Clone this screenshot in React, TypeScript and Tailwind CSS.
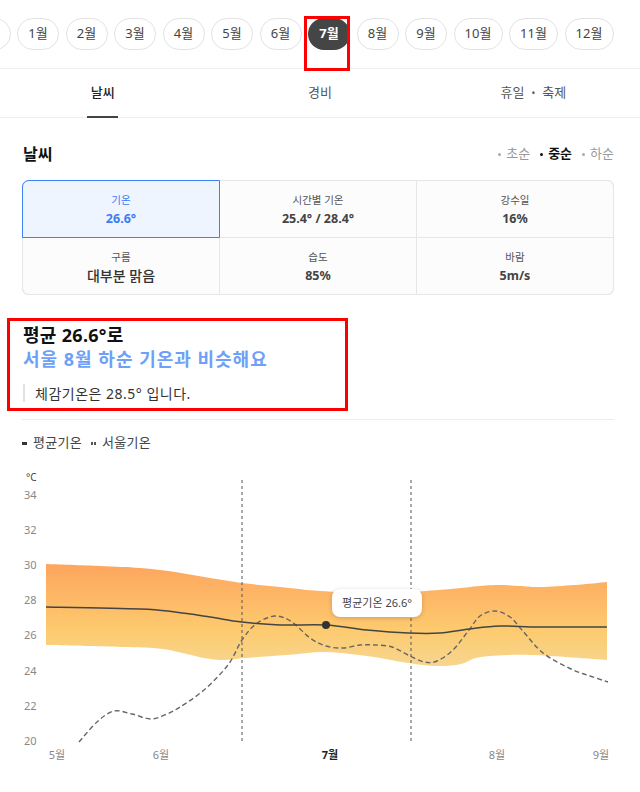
import React from "react";

type Pt = [number, number];

function smooth(points: Pt[], t = 0.5): string {
  let d = `M${points[0][0]},${points[0][1]}`;
  for (let i = 0; i < points.length - 1; i++) {
    const p0 = points[i - 1] || points[i];
    const p1 = points[i];
    const p2 = points[i + 1];
    const p3 = points[i + 2] || p2;
    const c1x = p1[0] + ((p2[0] - p0[0]) / 6) * t * 2;
    const c1y = p1[1] + ((p2[1] - p0[1]) / 6) * t * 2;
    const c2x = p2[0] - ((p3[0] - p1[0]) / 6) * t * 2;
    const c2y = p2[1] - ((p3[1] - p1[1]) / 6) * t * 2;
    d += ` C${c1x.toFixed(1)},${c1y.toFixed(1)} ${c2x.toFixed(1)},${c2y.toFixed(1)} ${p2[0]},${p2[1]}`;
  }
  return d;
}

const topEdge: Pt[] = [
  [46, 564], [100, 566], [140, 568], [175, 572], [210, 578], [242, 583], [280, 587],
  [320, 591], [370, 593], [410, 592], [450, 589], [480, 586], [500, 585], [520, 586],
  [540, 587], [575, 585], [607, 582],
];
const bottomEdge: Pt[] = [
  [46, 645], [122, 647], [163, 649], [204, 658], [224, 660], [245, 658], [286, 655],
  [326, 652], [367, 656], [408, 663], [437, 666], [461, 664], [481, 657], [530, 655],
  [607, 660],
];
const meanLine: Pt[] = [
  [46, 607], [140, 609], [175, 612], [210, 617], [242, 622], [280, 625], [326, 625],
  [367, 630], [408, 633], [440, 633], [469, 629], [500, 626], [540, 627], [607, 627],
];
const seoulLine: Pt[] = [
  [79, 742], [97, 722], [114, 711], [132, 714], [151, 719], [167, 714], [180, 707],
  [204, 690], [228, 665], [242, 640], [256, 624], [275, 616], [292, 622], [310, 638],
  [326, 646], [343, 648], [360, 645], [375, 645], [392, 647], [408, 655], [424, 662],
  [437, 661], [453, 650], [469, 630], [480, 616], [495, 611], [510, 617], [522, 630],
  [543, 653], [571, 669], [590, 676], [608, 682],
];

function areaPath(): string {
  const top = smooth(topEdge);
  const rev = [...bottomEdge].reverse();
  const bottom = smooth(rev).replace(/^M/, "L");
  return `${top} ${bottom} Z`;
}

const months = ["1월", "2월", "3월", "4월", "5월", "6월", "7월", "8월", "9월", "10월", "11월", "12월"];

function Cell({
  label,
  value,
  active,
  big,
  className,
}: {
  label: string;
  value: string;
  active?: boolean;
  big?: boolean;
  className?: string;
}) {
  return (
    <div
      className={
        "flex flex-col items-center justify-center pt-[2px] " +
        (active ? "bg-[#eef5ff] outline outline-1 outline-[#3d82f2] rounded-tl-[6px] z-10 " : "bg-[#fcfcfc] ") +
        (className || "")
      }
    >
      <div className={"text-[10.5px] leading-[14px] " + (active ? "text-[#3b7cf0]" : "text-[#555]")}>{label}</div>
      <div
        className={
          "mt-[3px] leading-[18px] " +
          (big ? "text-[14px] font-medium text-[#333]" : "text-[12.5px] font-bold ") +
          (active ? "text-[#3b7cf0]" : big ? "" : "text-[#444]")
        }
      >
        {value}
      </div>
    </div>
  );
}

function Dot({ dark }: { dark?: boolean }) {
  return <span className={"inline-block w-[3px] h-[3px] rounded-full mr-[5px] " + (dark ? "bg-[#111]" : "bg-[#aaa]")} />;
}

export default function App() {
  return (
    <div
      className="relative w-[640px] h-[792px] overflow-hidden bg-white text-[#222]"
      style={{ fontFamily: "'Noto Sans', 'Noto Sans CJK KR', sans-serif" }}
    >
      {/* Month bar */}
      <div className="h-[69px] border-b border-[#eeeeee] pt-[18px] overflow-hidden">
        <div className="flex gap-[6.5px] ml-[-39.5px]">
          <div className="w-[50px] h-[32px] shrink-0 rounded-full border border-[#e3e3e3]" />
          {months.map((m) => {
            const sel = m === "7월";
            const wide = m.length > 2;
            return (
              <div
                key={m}
                className={
                  "h-[32px] shrink-0 rounded-full flex items-center justify-center text-[13px] " +
                  (wide ? "w-[49px] " : "w-[42px] ") +
                  (sel ? "bg-[#454545] text-white font-bold" : "border border-[#e3e3e3] text-[#444]")
                }
              >
                {m}
              </div>
            );
          })}
        </div>
      </div>

      {/* Tabs */}
      <div className="grid grid-cols-3 h-[49px] border-b border-[#eeeeee]">
        <div className="relative flex items-center justify-center text-[13px] font-medium text-[#222]">
          <span className="mr-[8px]">날씨</span>
          <div className="absolute bottom-[-1px] left-[87px] w-[31px] h-[2px] bg-[#444]" />
        </div>
        <div className="flex items-center justify-center text-[13px] text-[#555]">경비</div>
        <div className="flex items-center justify-center text-[13px] text-[#555]">
          휴일<span className="mx-[7px] text-[10px]">•</span>축제
        </div>
      </div>

      {/* Weather section */}
      <div className="pl-[22px] pr-[26px]">
        <div className="mt-[24px] h-[24px] flex items-center justify-between">
          <div className="text-[16px] font-bold text-[#111] pl-[1px]">날씨</div>
          <div className="flex items-center text-[13px]">
            <Dot />
            <span className="text-[#999]">초순</span>
            <span className="ml-[10px]" />
            <Dot dark />
            <span className="text-[#111] font-bold">중순</span>
            <span className="ml-[10px]" />
            <Dot />
            <span className="text-[#999]">하순</span>
          </div>
        </div>

        <div className="mt-[14px] grid grid-cols-3 grid-rows-[56px_56px] gap-px bg-[#e6e6e6] border border-[#e6e6e6] rounded-[6px]">
          <Cell label="기온" value="26.6°" active />
          <Cell label="시간별 기온" value="25.4° / 28.4°" />
          <Cell label="강수일" value="16%" className="rounded-tr-[6px]" />
          <Cell label="구름" value="대부분 맑음" big className="rounded-bl-[6px]" />
          <Cell label="습도" value="85%" />
          <Cell label="바람" value="5m/s" className="rounded-br-[6px]" />
        </div>

        {/* Summary */}
        <div className="mt-[28px] pl-[1px]">
          <div className="text-[18px] leading-[24px] font-bold text-[#111] tracking-[0.3px]">평균 26.6°로</div>
          <div className="text-[18px] leading-[24px] font-bold text-[#6fa0f8] tracking-[1px]">서울 8월 하순 기온과 비슷해요</div>
          <div className="mt-[13px] h-[18px] border-l-2 border-[#e2e2e2] pl-[10px] flex items-center text-[14px] tracking-[0.5px] text-[#333]">
            체감기온은 28.5° 입니다.
          </div>
        </div>

        <div className="mt-[17px] border-t border-[#ececec]" />

        {/* Legend */}
        <div className="mt-[14px] h-[18px] flex items-center text-[13px] tracking-[0.3px] text-[#444]">
          <span className="inline-block w-[5px] h-[3px] bg-[#333] mr-[6px]" />
          평균기온
          <span className="inline-flex gap-[1px] ml-[9px] mr-[6px]">
            <span className="inline-block w-[2px] h-[3px] bg-[#555]" />
            <span className="inline-block w-[2px] h-[3px] bg-[#555]" />
          </span>
          서울기온
        </div>
      </div>

      {/* Chart */}
      <div className="relative mt-[8px] w-[640px] h-[332px]">
        <svg width={640} height={332} viewBox="0 460 640 332" className="block">
          <defs>
            <linearGradient id="band" x1="0" y1="564" x2="0" y2="672" gradientUnits="userSpaceOnUse">
              <stop offset="0" stopColor="#fda55e" />
              <stop offset="0.6" stopColor="#fdca6e" />
              <stop offset="1" stopColor="#f6d893" />
            </linearGradient>
          </defs>
          <text x={26} y={481} fontSize={10} fill="#444">°C</text>
          {[34, 32, 30, 28, 26, 24, 22, 20].map((v) => (
            <text key={v} x={24} y={741 - (v - 20) * 17.6 + 4} fontSize={11} fill="#888">
              {v}
            </text>
          ))}
          <path d={areaPath()} fill="url(#band)" />
          <line x1={242} y1={480} x2={242} y2={742} stroke="#555" strokeWidth={1} strokeDasharray="3 3" />
          <line x1={411} y1={480} x2={411} y2={742} stroke="#555" strokeWidth={1} strokeDasharray="3 3" />
          <path d={smooth(seoulLine)} fill="none" stroke="#666" strokeWidth={1.4} strokeDasharray="5 3" />
          <path d={smooth(meanLine)} fill="none" stroke="#444" strokeWidth={1.5} />
          <circle cx={326} cy={625} r={4} fill="#333" />
          <text x={57} y={759} fontSize={11} fill="#888" textAnchor="middle">5월</text>
          <text x={161} y={759} fontSize={11} fill="#888" textAnchor="middle">6월</text>
          <text x={330} y={759} fontSize={11} fill="#222" fontWeight="bold" textAnchor="middle">7월</text>
          <text x={497} y={759} fontSize={11} fill="#888" textAnchor="middle">8월</text>
          <text x={601} y={759} fontSize={11} fill="#888" textAnchor="middle">9월</text>
        </svg>
        <div className="absolute left-[332px] top-[129px] w-[90px] h-[28px] rounded-[8px] bg-white shadow-[0_1px_5px_rgba(0,0,0,0.18)] flex items-center justify-center text-[11px] text-[#444]">
          평균기온 26.6°
        </div>
      </div>

      {/* Annotation boxes */}
      <div className="absolute left-[304px] top-[16px] w-[46px] h-[55px] border-[3px] border-[#ff0000] pointer-events-none" />
      <div className="absolute left-[7px] top-[318px] w-[341px] h-[93px] border-[3px] border-[#ff0000] pointer-events-none" />
    </div>
  );
}
